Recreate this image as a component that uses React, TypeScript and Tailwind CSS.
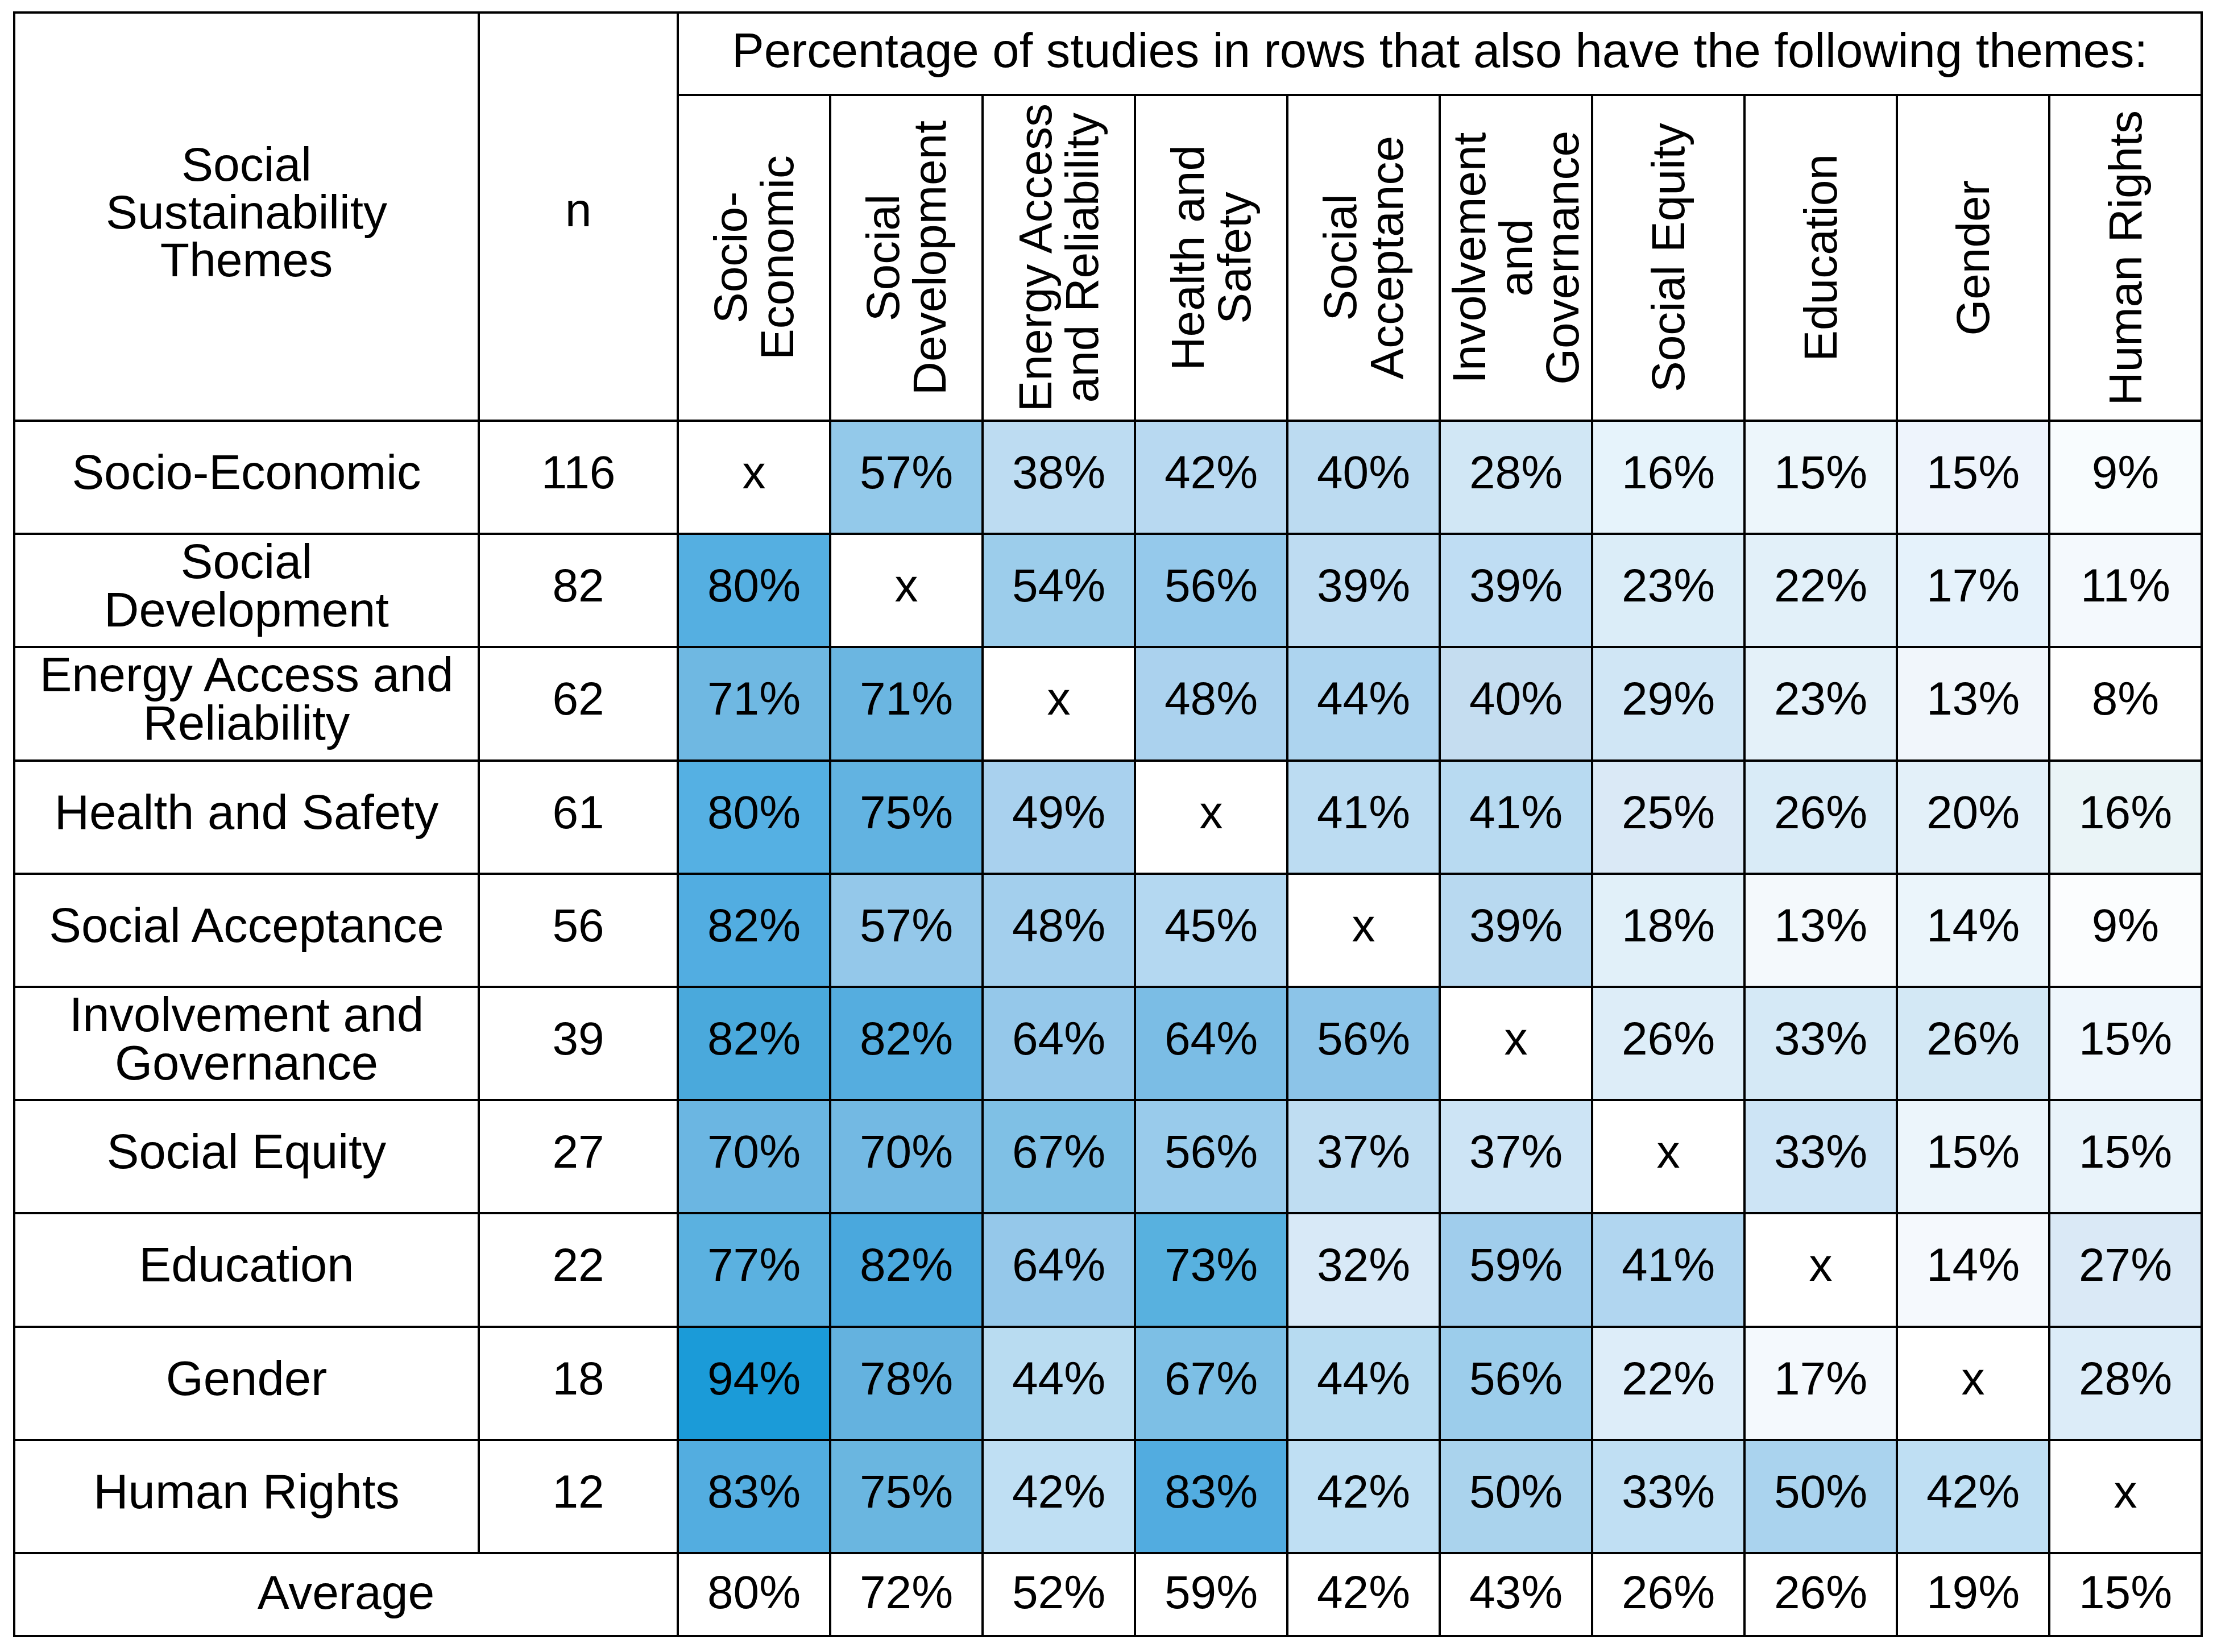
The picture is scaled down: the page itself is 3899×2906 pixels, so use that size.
import React from 'react';

type Row = {
  label: string[];
  n: number;
  values: (number | null)[];
  colors: string[];
};

const COLUMN_HEADS: string[][] = [
  ['Socio-', 'Economic'],
  ['Social', 'Development'],
  ['Energy Access', 'and Reliability'],
  ['Health and', 'Safety'],
  ['Social', 'Acceptance'],
  ['Involvement', 'and', 'Governance'],
  ['Social Equity'],
  ['Education'],
  ['Gender'],
  ['Human Rights'],
];

// heat colours picked cell by cell from the source figure
const ROWS: Row[] = [
  {
    label: ['Socio-Economic'],
    n: 116,
    values: [null, 57, 38, 42, 40, 28, 16, 15, 15, 9],
    colors: ['#ffffff', '#93c9ea', '#bddcf2', '#b8d9f1', '#bcdbf1', '#d1e7f5', '#e6f3fb', '#edf6fb', '#eef4fc', '#f8fcfe'],
  },
  {
    label: ['Social', 'Development'],
    n: 82,
    values: [80, null, 54, 56, 39, 39, 23, 22, 17, 11],
    colors: ['#55afe1', '#ffffff', '#9ccdeb', '#95c9eb', '#bedcf2', '#bfddf3', '#dbedf8', '#e2f0f9', '#e5f2fb', '#f4f9fd'],
  },
  {
    label: ['Energy Access and', 'Reliability'],
    n: 62,
    values: [71, 71, null, 48, 44, 40, 29, 23, 13, 8],
    colors: ['#6fb8e2', '#6bb6e1', '#ffffff', '#abd2ee', '#add4ef', '#c5ddf0', '#d0e6f5', '#e4f1f9', '#f1f6fb', '#ffffff'],
  },
  {
    label: ['Health and Safety'],
    n: 61,
    values: [80, 75, 49, null, 41, 41, 25, 26, 20, 16],
    colors: ['#55b0e3', '#62b3e1', '#a9d1ee', '#ffffff', '#bcdcf2', '#b8daf1', '#dae9f6', '#d9ebf7', '#e3f0f9', '#eaf4f7'],
  },
  {
    label: ['Social Acceptance'],
    n: 56,
    values: [82, 57, 48, 45, null, 39, 18, 13, 14, 9],
    colors: ['#52ade1', '#94c8ea', '#a3cfed', '#b4d8f1', '#ffffff', '#b8d9f0', '#e1f0f9', '#f4f9fc', '#ebf5fb', '#fbfdfe'],
  },
  {
    label: ['Involvement and', 'Governance'],
    n: 39,
    values: [82, 82, 64, 64, 56, null, 26, 33, 26, 15],
    colors: ['#4aa9dc', '#55addf', '#95c8ea', '#7bbde5', '#8cc4e8', '#ffffff', '#ddedf8', '#d5e9f6', '#d3e8f5', '#eef6fc'],
  },
  {
    label: ['Social Equity'],
    n: 27,
    values: [70, 70, 67, 56, 37, 37, null, 33, 15, 15],
    colors: ['#6bb6e2', '#73b9e3', '#7fc0e5', '#99cbeb', '#bfddf2', '#cde4f5', '#ffffff', '#cde4f5', '#ecf5fb', '#e9f3fa'],
  },
  {
    label: ['Education'],
    n: 22,
    values: [77, 82, 64, 73, 32, 59, 41, null, 14, 27],
    colors: ['#5bb1e0', '#4aa8dd', '#95c8ea', '#58b1df', '#d8e9f7', '#a0cdec', '#b1d6f0', '#ffffff', '#f5f9fd', '#dae9f6'],
  },
  {
    label: ['Gender'],
    n: 18,
    values: [94, 78, 44, 67, 44, 56, 22, 17, null, 28],
    colors: ['#1b9bd8', '#64b2df', '#b9dcf1', '#7dbfe5', '#b7dbf1', '#9ccdeb', '#ddedf9', '#f4f9fd', '#ffffff', '#dcecf8'],
  },
  {
    label: ['Human Rights'],
    n: 12,
    values: [83, 75, 42, 83, 42, 50, 33, 50, 42, null],
    colors: ['#53ade0', '#6ab6e0', '#bfdff3', '#52ace0', '#bfdff3', '#aad3ed', '#c0dff3', '#aad3ee', '#bfdff3', '#ffffff'],
  },
];

const AVERAGES = [80, 72, 52, 59, 42, 43, 26, 26, 19, 15];

const cell = 'flex items-center justify-center text-center bg-white';

export default function App() {
  return (
    <div className="w-[3899px] h-[2906px] bg-white pl-[23px] pt-[20px] font-['Liberation_Sans',Arial,sans-serif] text-black">
      <div className="grid grid-cols-[813px_346px_repeat(10,264px)] grid-rows-[141px_569px_repeat(10,195.2px)_142px] gap-[4px] p-[4px] bg-black w-fit">
        {/* Header block */}
        <div className={`${cell} row-span-2 text-[84px] leading-[84px] pb-[16px]`}>
          <div>
            Social
            <br />
            Sustainability
            <br />
            Themes
          </div>
        </div>
        <div className={`${cell} row-span-2 text-[84px] pb-[24px]`}>n</div>
        <div className={`${cell} col-span-10 text-[85px] pb-[12px]`}>
          Percentage of studies in rows that also have the following themes:
        </div>

        {COLUMN_HEADS.map((lines, i) => (
          <div key={i} className={`${cell} overflow-hidden`}>
            <div className="[writing-mode:vertical-rl] rotate-180 text-center text-[82px] leading-[82px]">
              {lines.map((l) => (
                <div key={l} className="whitespace-nowrap">
                  {l}
                </div>
              ))}
            </div>
          </div>
        ))}

        {/* Data rows */}
        {ROWS.map((row) => (
          <React.Fragment key={row.label.join(' ')}>
            <div className={`${cell} text-[85px] leading-[85px] pb-[18px]`}>
              <div>
                {row.label.map((l, i) => (
                  <div key={i} className="whitespace-nowrap">
                    {l}
                  </div>
                ))}
              </div>
            </div>
            <div className={`${cell} text-[82px] pb-[18px]`}>{row.n}</div>
            {row.values.map((v, j) => (
              <div
                key={j}
                className="flex items-center justify-center text-[82px] pb-[18px]"
                style={{ backgroundColor: row.colors[j] }}
              >
                {v === null ? 'x' : `${v}%`}
              </div>
            ))}
          </React.Fragment>
        ))}

        {/* Average row */}
        <div className={`${cell} col-span-2 text-[84px] pb-[8px]`}>Average</div>
        {AVERAGES.map((v, j) => (
          <div key={j} className={`${cell} text-[82px] pb-[8px]`}>
            {v}%
          </div>
        ))}
      </div>
    </div>
  );
}
